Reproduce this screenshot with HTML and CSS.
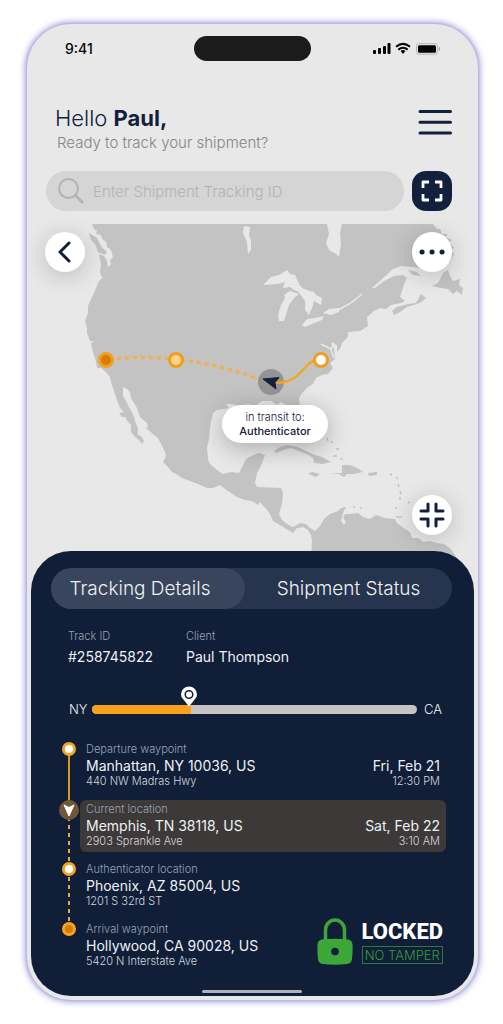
FILE: index.html
```html
<!DOCTYPE html>
<html lang="en">
<head>
<meta charset="utf-8">
<meta name="viewport" content="width=device-width, initial-scale=1">
<title>Shipment tracking</title>
<link rel="stylesheet" href="styles.css">
</head>
<body>
<main class="phone">
  <div class="status">
    <span class="clock">9:41</span>
    <span class="island"></span>
    <svg class="signals" viewBox="0 0 68 14" width="68" height="14" aria-hidden="true">
      <g fill="#050505">
        <rect x="1" y="8" width="3" height="4" rx="1"/><rect x="6" y="6" width="3" height="6" rx="1"/><rect x="11" y="4" width="3" height="8" rx="1"/><rect x="15.500" y="1" width="3" height="11" rx="1"/>
        <path d="M28.600 9q2.400-1.800 4.800 0L31 12z"/>
        <rect x="46" y="3.200" width="18" height="7.500" rx="1.500"/>
      </g>
      <g fill="none" stroke="#050505" stroke-width="2"><path d="M24 4.700q7-5.600 14 0M26.300 7.600q4.700-3.600 9.400 0"/></g>
      <rect x="44.500" y="1.700" width="21" height="10.500" rx="2.500" fill="none" stroke="#b5b5b5"/>
      <path d="M67.300 5.200v3.500" stroke="#999"/>
    </svg>
  </div>

  <header class="header">
    <div>
      <h1 class="hello">Hello <strong>Paul,</strong></h1>
      <p class="prompt">Ready to track your shipment?</p>
    </div>
    <button class="menu" type="button" aria-label="Menu">
      <svg viewBox="0 0 34 26" width="34" height="26"><path d="M2 2.500h30.500M2 13.200h30.500M2 24h30.500" stroke="#12203c" stroke-width="3" stroke-linecap="round"/></svg>
    </button>
  </header>

  <form class="search">
    <label class="field">
      <svg viewBox="0 0 26 26" width="26" height="26" fill="none" stroke="#b3b3b3" stroke-width="2"><circle cx="10.500" cy="10.500" r="9.500"/><path d="M17 17l8 8" stroke-width="2.500"/></svg>
      <input type="text" placeholder="Enter Shipment Tracking ID" aria-label="Enter Shipment Tracking ID">
    </label>
    <button class="scan" type="button" aria-label="Scan code">
      <svg viewBox="0 0 22 22" width="22" height="22" fill="none" stroke="#fff" stroke-width="2.800" stroke-linejoin="round"><path d="M2 8V2h6M14 2h6v6M20 14v6h-6M8 20H2v-6"/></svg>
    </button>
  </form>

  <section class="map" aria-label="Shipment route">
    <svg class="world" viewBox="27 223 451 337">
      <g fill="#c3c3c3">
        <path d="M92 224L94 229 97 231 96 234 101 235 102 239 106 242 107 247 111 250 113 257 110 260 111 264 108 267 107 261 104 256 99 254 100 259 101 265 100 271 101 276 103 277 100 280 98 283 94 293 90 301 88 306 88 313 85 321 87 328 87 333 90 341 94 341 91 343 92 348 94 355 96 362 97 368 101 368 105 371 110 377 111 382 114 391 117 400 120 408 124 412 119 413 122 417 125 417 128 422 131 425 131 432 135 437 140 441 142 444 144 441 141 436 138 435 138 429 135 421 134 416 130 409 127 403 123 396 123 387 127 389 130 392 131 398 137 408 140 417 147 423 148 426 146 428 153 434 158 438 162 446 165 452 166 456 163 462 168 467 172 472 178 475 182 478 190 481 198 484 207 488 213 488 220 485 228 491 237 497 245 500 252 501 258 505 260 502 267 510 270 514 273 521 280 525 288 530 293 533 297 528 303 527 308 530 311 535 312 540 311 562 458 562 455 555 450 548 444 544 437 543 430 541 423 542 418 538 412 538 410 532 402 527 397 523 395 519 385 518 376 515 370 519 363 517 358 513 350 514 345 514 343 518 346 522 344 525 341 521 343 513 346 507 341 508 338 511 330 514 324 519 320 526 315 531 310 528 306 524 300 523 293 527 287 524 282 520 279 514 282 504 283 493 281 488 257 487 255 483 257 473 261 466 265 455 259 453 251 456 246 459 243 465 239 473 231 472 223 474 217 470 210 464 208 460 207 448 209 439 210 427 213 413 217 410 224 409 229 408 226 404 233 404 238 406 248 404 255 406 262 401 271 401 277 405 281 402 286 405 289 412 292 418 297 425 301 423 303 416 300 409 299 398 303 392 308 387 313 384 316 378 322 375 328 374 333 368 330 363 335 359 334 349 331 342 337 345 337 352 341 347 342 343 347 338 349 332 360 331 368 326 367 317 374 311 380 308 386 309 391 305 401 303 405 301 400 297 402 291 404 284 407 278 403 275 394 276 384 281 375 288 372 288 382 279 393 269 401 266 413 267 427 269 440 267 450 262 454 254 450 250 454 248 449 242 452 240 445 237 448 234 442 234 440 229 437 229 433 224Z"/>
        <path d="M89 233L97 238 101 246 107 252 105 255 98 252 95 244 91 240Z"/>
        <path d="M392 311L397 307 408 304 416 303 421 294 426 298 420 303 407 307 400 312 394 315ZM408 270L417 272 421 276 413 275ZM432 286L438 283 443 273 448 270 450 276 453 281 460 279 459 285 463 288 462 295 457 291 453 294 448 289 441 288ZM274 451L280 447 287 445 298 447 306 451 315 455 322 457 331 462 322 464 314 463 313 458 307 454 299 451 291 448 283 450 276 453ZM330 473L342 473 342 465 350 465 357 468 363 472 353 474 347 474 344 477 339 474ZM308 474L312 472 320 474 316 477ZM368 473L377 472 377 475 369 476Z"/>
        <path d="M327 438l1 3M331 441l2 2M336 449h3M333 456h4M341 458l1 2M390 474l2 1M396 477l2 2M398 484l1 3M400 491l1 3M400 497v3M396 507v2M408 502l2 1M353 507h2M360 508h2M396 517h6" fill="none" stroke="#c3c3c3" stroke-width="1.500"/>
      </g>
      <g fill="#e8e8e8">
        <path d="M244 226l6 1-1 8 2 6v9l-3 4-1-12-4-9zM327 224h15l-2 9 1 11-2 13-3-3-7-4-3-7 3-9zM263 285l8-8 8-2 8-5 3 4 5 1 4 9 4 5-7 2-6-4-7 1 2-6-8 2zM279 321l-1-6 3-10 4-7-1-3 6-4 9 3-5 4-5 7-5 16zM297 290l5-2 8 3 4 1 2 3 6 3-1 7-7-4-2 7-3 7-4-5v-9zM302 325l5-6 8-1 9-2-2 4-10 4-7 3zM323 313l6-4 10-1v4l-8 3z"/>
      </g>
      <path d="M338 310l11-6 7-5 6-5M333 343l-2 7 3 8M321 344l10 5M348 333l12-1" stroke="#e8e8e8" fill="none" stroke-width="1.500"/>
      <g fill="none" stroke="#f5b13c" stroke-width="3">
        <path d="M117 358.500Q148 356 176 359.500Q220 364 261 380" stroke-dasharray="4 4"/>
        <path d="M321 360C302 358 305 384 273 383" stroke="#f0a62a" stroke-width="2.500"/>
      </g>
      <circle cx="271" cy="382" r="13" fill="#8c8c8c" opacity=".85"/>
      <path d="M287 381q-5 2-12 2" fill="none" stroke="#f0a62a" stroke-width="2.500"/>
      <path d="M263 379l16-1.500-4 5 1 6.500z" fill="#12203c" stroke="#12203c" stroke-linejoin="round"/>
      <g stroke="#f0a020" stroke-width="3"><circle cx="106" cy="360" r="6.500" fill="#dc7b04"/><circle cx="176" cy="360" r="6.500" fill="#ffd18a"/><circle cx="321" cy="360" r="6.500" fill="#fff"/></g>
    </svg>
    <button class="round back" type="button" aria-label="Back">
      <svg viewBox="0 0 40 40"><path d="M24 11l-9 9 9 9" stroke-width="3"/></svg>
    </button>
    <button class="round more" type="button" aria-label="More">
      <svg viewBox="0 0 40 40"><path d="M10 20h.1M20 20h.1M30 20h.1" stroke-width="5"/></svg>
    </button>
    <button class="round collapse" type="button" aria-label="Collapse map">
      <svg viewBox="0 0 40 40"><path d="M16 9v7H9M24 9v7h7M16 31v-7H9M24 31v-7h7" stroke-width="3"/></svg>
    </button>
    <p class="transit">in transit to:<strong>Authenticator</strong></p>
  </section>

  <section class="panel">
    <nav class="tabs">
      <button class="tab tab-active" type="button">Tracking Details</button>
      <button class="tab" type="button">Shipment Status</button>
    </nav>
    <dl class="facts">
      <div><dt>Track ID</dt><dd>#258745822</dd></div>
      <div><dt>Client</dt><dd>Paul Thompson</dd></div>
    </dl>
    <div class="progress">
      <span>NY</span>
      <div class="bar">
        <div class="done" style="width:30.500%"></div>
        <svg class="pin" viewBox="0 0 18 21" width="18" height="21"><path d="M9 20.500L3 13Q1 11 1 8.500a8 8 0 0 1 16 0Q17 11 15 13z" fill="#fff"/><circle cx="9" cy="8.500" r="3.800" fill="none" stroke="#12203c" stroke-width="1.500"/></svg>
      </div>
      <span>CA</span>
    </div>
    <ol class="stops">
      <li class="stop solid">
        <span class="dot"></span>
        <div class="card">
          <div><p class="kind">Departure waypoint</p><p class="place">Manhattan, NY 10036, US</p><p class="street">440 NW Madras Hwy</p></div>
          <div class="when"><p class="place">Fri, Feb 21</p><p class="street">12:30 PM</p></div>
        </div>
      </li>
      <li class="stop dashed">
        <svg class="here" viewBox="0 0 20 20" width="20" height="20"><circle cx="10" cy="10" r="10" fill="#715637"/><path d="M5 5l5 2.500L15 5l-5 11z" fill="#fff" stroke="#fff" stroke-linejoin="round"/></svg>
        <div class="card current">
          <div><p class="kind">Current location</p><p class="place">Memphis, TN 38118, US</p><p class="street">2903 Sprankle Ave</p></div>
          <div class="when"><p class="place">Sat, Feb 22</p><p class="street">3:10 AM</p></div>
        </div>
      </li>
      <li class="stop dashed">
        <span class="dot"></span>
        <div class="card">
          <div><p class="kind">Authenticator location</p><p class="place">Phoenix, AZ 85004, US</p><p class="street">1201 S 32rd ST</p></div>
        </div>
      </li>
      <li class="stop">
        <span class="dot dot-end"></span>
        <div class="card">
          <div><p class="kind">Arrival waypoint</p><p class="place">Hollywood, CA 90028, US</p><p class="street">5420 N Interstate Ave</p></div>
          <div class="seal">
            <svg viewBox="0 0 36 47" width="36" height="47"><path d="M8.500 24V12a9.500 10 0 0 1 19 0v12" fill="none" stroke="#3da639" stroke-width="3.500"/><path d="M5 21.500Q18 20 31 21.500q4 .5 4.500 5Q36 33 35 41q-.5 4.500-5 5-12 1.500-24 0-4.500-.5-5-5Q0 33 .5 26.500 1 22 5 21.500z" fill="#3da639"/><circle cx="18" cy="33.500" r="3.800" fill="#12203c"/></svg>
            <div class="seal-text"><strong>LOCKED</strong><span>NO TAMPER</span></div>
          </div>
        </div>
      </li>
    </ol>
    <div class="home"></div>
  </section>
</main>
</body>
</html>
```
FILE: styles.css
```css
* { box-sizing: border-box; }
body {
  margin: 0;
  padding: 24px 25px 25px 27px;
  background: #fff;
  font-family: Inter, "Open Sans", sans-serif;
  font-weight: 300;
  color: #12203c;
}
h1, p, dl, dd, ol { margin: 0; padding: 0; }
button { border: 0; padding: 0; font: inherit; color: inherit; background: none; cursor: pointer; }
svg { display: block; }

.phone {
  display: flex;
  flex-direction: column;
  border-radius: 44px;
  overflow: hidden;
  background: #e8e8e8;
  box-shadow: 0 0 0 1px #b9b8e6, 0 0 7px 1px #8583d0;
}
.status {
  display: grid;
  grid-template-columns: 1fr 117px 1fr;
  align-items: center;
  padding: 12px 38px 0;
}
.clock { font-size: 14px; font-weight: 500; color: #050505; }
.island { height: 25px; border-radius: 13px; background: #1b1b1b; }
.signals { justify-self: end; }

.header {
  display: flex;
  justify-content: space-between;
  align-items: flex-start;
  padding: 43px 26px 0 28px;
}
.hello { font-size: 22px; line-height: 28px; font-weight: 300; }
.hello strong { font-weight: 700; }
.prompt { padding-left: 2px; font-size: 15px; line-height: 21px; color: #858585; }
.menu { margin-top: 5px; }

.search { display: flex; gap: 8px; padding: 18px 26px 0 19px; }
.field {
  flex: 1;
  min-width: 0;
  display: flex;
  align-items: center;
  gap: 9px;
  height: 40px;
  padding: 0 12px;
  border-radius: 20px;
  background: #d5d5d5;
}
.field input {
  flex: 1;
  min-width: 0;
  border: 0;
  padding: 0;
  background: none;
  font: inherit;
  font-size: 15px;
  color: #12203c;
}
.field input::placeholder { color: #b3b3b3; opacity: 1; }
.scan {
  display: grid;
  place-items: center;
  width: 40px;
  height: 40px;
  border-radius: 14px;
  background: #12203c;
}

.map { position: relative; margin-top: 12px; }
.world { width: 100%; height: auto; }
.round {
  position: absolute;
  width: 40px;
  height: 40px;
  border-radius: 50%;
  background: #fff;
  box-shadow: 0 4px 24px #0003;
}
.round svg { fill: none; stroke: #12203c; stroke-linecap: round; stroke-linejoin: round; }
.back { left: 18px; top: 9px; }
.more { right: 26px; top: 9px; }
.collapse { right: 26px; bottom: 25px; }
.transit {
  position: absolute;
  left: 55%;
  top: 54%;
  width: 106px;
  transform: translateX(-50%);
  padding: 5px 0;
  border-radius: 20px;
  background: #fff;
  box-shadow: 0 5px 24px #0004;
  font-size: 11px;
  line-height: 14px;
  text-align: center;
}
.transit strong { display: block; font-weight: 500; }

.panel {
  position: relative;
  margin: -9px 4px 4px;
  padding: 17px 22px 3px 20px;
  border-radius: 40px;
  background: #101e38;
  color: #eef1f5;
}
.tabs {
  display: grid;
  grid-template-columns: 194px 1fr;
  border-radius: 21px;
  background: #26344d;
}
.tab { height: 41px; border-radius: 21px; font-size: 19px; padding-right: 16px; }
.tab + .tab { padding: 0; }
.tab-active { background: #38455c; }

.facts {
  display: grid;
  grid-template-columns: 118px 1fr;
  padding: 19px 0 0 17px;
}
.facts dt { font-size: 11px; line-height: 16px; color: #9aa3b3; }
.facts dd { font-size: 14px; line-height: 26px; font-weight: 400; }

.progress {
  display: flex;
  align-items: center;
  gap: 7px;
  padding: 30px 10px 0 18px;
  font-size: 13px;
  line-height: 18px;
}
.progress span:first-child { margin-right: -3px; }
.bar { position: relative; flex: 1; height: 9px; border-radius: 5px; background: #c6c3c5; }
.done { height: 9px; border-radius: 5px 0 0 5px; background: #f9a11b; }
.pin { position: absolute; left: 30%; bottom: 7px; margin-left: -9px; }

.stops { list-style: none; padding: 22px 6px 0 7px; }
.stop {
  position: relative;
  display: grid;
  grid-template-columns: 22px 1fr;
  justify-items: center;
  align-items: start;
  height: 60px;
}
.solid::before, .dashed::before {
  content: "";
  position: absolute;
  left: 10px;
  top: 9px;
  width: 2px;
  height: 60px;
  background: #d9971f;
}
.dashed::before { background: repeating-linear-gradient(#e5a937 0 4px, transparent 4px 8px); }
.dot {
  position: relative;
  z-index: 1;
  width: 14px;
  height: 14px;
  margin-top: 2px;
  border: 3px solid #f4a528;
  border-radius: 50%;
  background: #fff;
}
.dot-end { background: #dc7b04; }
.here { position: relative; z-index: 1; }
.card {
  justify-self: stretch;
  display: flex;
  justify-content: space-between;
  height: 52px;
  padding: 1px 6px;
  border-radius: 6px;
}
.current { background: #3c3938; }
.kind { font-size: 11px; line-height: 16px; color: #9aa3b3; }
.place { font-size: 14px; line-height: 17px; font-weight: 400; }
.street { font-size: 11px; line-height: 14px; color: #d3d8df; }
.when { padding-top: 16px; text-align: right; }
.seal { display: flex; align-items: flex-start; gap: 9px; margin: -3px -3px 0 0; }
.seal-text { display: flex; flex-direction: column; align-items: center; color: #fff; }
.seal strong { font-family: "Liberation Sans Narrow", Roboto, sans-serif; font-size: 22px; line-height: 28px; font-weight: 800; }
.seal span {
  border: 1px solid #2c7a3d;
  padding: 0 2px;
  font-size: 13px;
  line-height: 16px;
  color: #389a3b;
}
.home { width: 100px; height: 3px; margin: 10px auto 0; border-radius: 2px; background: #aeb4b6; }
```
